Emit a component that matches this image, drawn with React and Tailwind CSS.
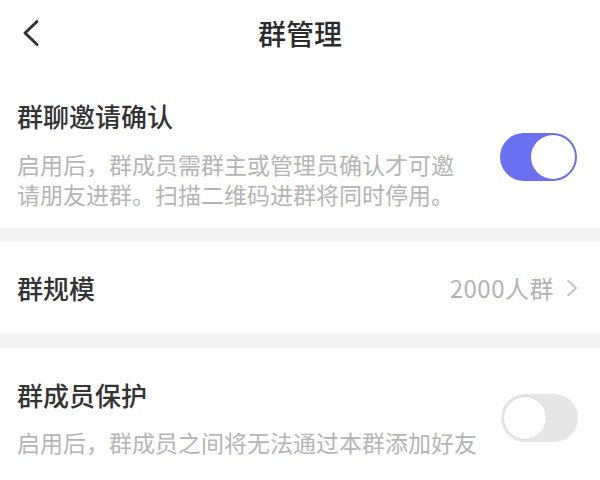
import React, { useState } from 'react';

const font = { fontFamily: '"Noto Sans CJK SC", "Noto Sans", sans-serif' };

function Toggle({ on, onChange }) {
  return (
    <button
      onClick={onChange}
      className={`flex h-[48px] w-[77px] shrink-0 items-center rounded-full p-[2px] ${
        on ? 'justify-end bg-[#6b70f0]' : 'justify-start bg-[#e6e6e6]'
      }`}
    >
      <span
        className={`h-[44px] w-[44px] rounded-full bg-white ${on ? '' : 'border border-[#dcdcdc]'}`}
      />
    </button>
  );
}

export default function App() {
  const [inviteConfirm, setInviteConfirm] = useState(true);
  const [memberProtect, setMemberProtect] = useState(false);

  return (
    <div className="h-[480px] w-[600px] overflow-hidden bg-white" style={font}>
      {/* header */}
      <div className="relative flex h-[66px] items-center justify-center">
        <button className="absolute left-[21px] top-[19px]">
          <svg width="20" height="28" viewBox="0 0 20 28" fill="none">
            <path d="M16 2.5 L4 14 L16 25.5" stroke="#333" strokeWidth="3" strokeLinecap="round" strokeLinejoin="round" />
          </svg>
        </button>
        <h1 className="text-[28px] font-medium leading-none text-[#2b2b2b]">群管理</h1>
      </div>

      {/* invite confirm */}
      <div className="flex items-center justify-between pl-[17px] pr-[23px] pt-[34px] pb-[19px]">
        <div className="w-[450px]">
          <div className="text-[26px] font-medium leading-[31px] text-[#333]">群聊邀请确认</div>
          <p className="mt-[18px] text-[23px] leading-[30px] text-[#b5b5b5]">
            启用后，群成员需群主或管理员确认才可邀请朋友进群。扫描二维码进群将同时停用。
          </p>
        </div>
        <div className="mt-[4px]">
          <Toggle on={inviteConfirm} onChange={() => setInviteConfirm(!inviteConfirm)} />
        </div>
      </div>

      <div className="h-[14px] bg-[#f5f5f5]" />

      {/* group size */}
      <div className="flex h-[91px] items-center justify-between pl-[17px] pr-[22px]">
        <span className="text-[26px] font-medium text-[#333]">群规模</span>
        <div className="flex items-center gap-[12px]">
          <span className="text-[24px] tracking-[0.5px] text-[#b3b3b3]">2000人群</span>
          <svg width="12" height="18" viewBox="0 0 12 18" fill="none">
            <path d="M2 1.5 L10 9 L2 16.5" stroke="#c4c4c4" strokeWidth="1.8" strokeLinecap="round" strokeLinejoin="round" />
          </svg>
        </div>
      </div>

      <div className="h-[15px] bg-[#f5f5f5]" />

      {/* member protect */}
      <div className="flex items-center justify-between pl-[17px] pr-[22px] pt-[31px] pb-[19px]">
        <div>
          <div className="text-[26px] font-medium leading-[31px] text-[#333]">群成员保护</div>
          <p className="mt-[17px] text-[23px] leading-[30px] text-[#b5b5b5]">
            启用后，群成员之间将无法通过本群添加好友
          </p>
        </div>
        <Toggle on={memberProtect} onChange={() => setMemberProtect(!memberProtect)} />
      </div>
    </div>
  );
}
